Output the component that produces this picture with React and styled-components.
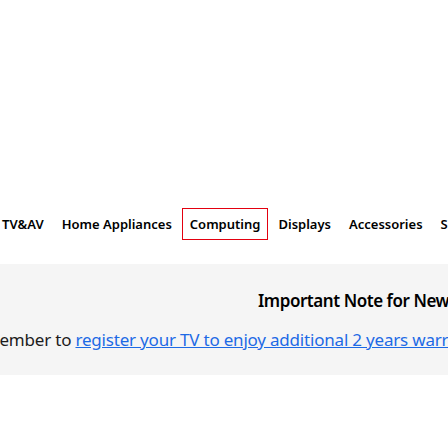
import React from 'react'
import styled, { createGlobalStyle } from 'styled-components'

const Global = createGlobalStyle`
  body {
    margin: 0;
    background: #fff;
    overflow: hidden;
    font-family: "Noto Sans", "Open Sans", sans-serif;
  }
`

const Page = styled.div`
  width: 448px;
  height: 448px;
  overflow: hidden;
  display: flex;
  flex-direction: column;
`

const Nav = styled.nav`
  display: flex;
  align-items: center;
  gap: 2px;
  margin-top: 208px;
  margin-left: -6px;
  white-space: nowrap;
`

const NavItem = styled.div`
  height: 32px;
  box-sizing: border-box;
  padding: 0 7px;
  display: flex;
  align-items: center;
  border: 1px solid ${props => props.active ? '#e3000f' : 'transparent'};
  font-size: 13px;
  font-weight: 600;
  color: #000;
`

const Notice = styled.section`
  margin-top: 24px;
  height: 111px;
  background: #f5f5f5;
  display: flex;
  flex-direction: column;
  white-space: nowrap;
`

const Title = styled.h2`
  margin: 25px 0 0 258px;
  font-size: 17px;
  font-weight: 600;
  letter-spacing: -0.45px;
  color: #000;
  line-height: 24px;
`

const Body = styled.p`
  margin: 14px 0 0 -36px;
  font-size: 17px;
  letter-spacing: -0.2px;
  line-height: 26px;
  color: #1c1c1c;
`

const Link = styled.a`
  color: #1d6ae5;
  text-decoration: underline;
`

export default () => {
  const items = ['TV&AV', 'Home Appliances', 'Computing', 'Displays', 'Accessories', 'Smart Things']

  return (
    <Page>
      <Global />
      <Nav>
        {items.map(item => (
          <NavItem key={item} active={item === 'Computing'}>{item}</NavItem>
        ))}
      </Nav>
      <Notice>
        <Title>Important Note for New TV Owners</Title>
        <Body>
          Remember to <Link href="#">register your TV to enjoy additional 2 years warranty</Link>
        </Body>
      </Notice>
    </Page>
  )
}
